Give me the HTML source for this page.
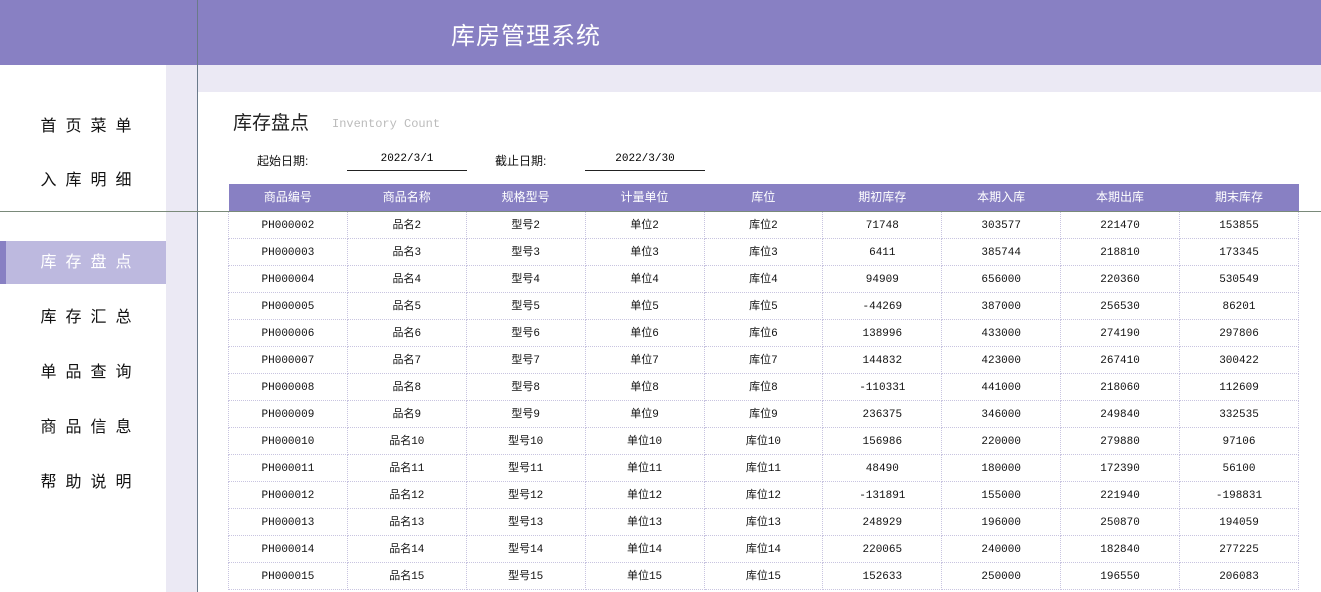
<!DOCTYPE html>
<html><head><meta charset="utf-8"><style>
body{margin:0;width:1321px;height:592px;overflow:hidden;position:relative;background:#fff;font-family:"Liberation Sans","Noto Sans CJK SC",sans-serif}
.hd{position:absolute;left:0;top:0;width:1321px;height:65px;background:#8880c3}
.hd .t{position:absolute;left:451px;top:16px;color:#fff;font-size:24px;letter-spacing:1px}
.vl{position:absolute;left:197px;top:0;width:1px;height:592px;background:#6a7a8a}
.strip{position:absolute;left:166px;top:65px;width:31px;height:527px;background:#ebe9f4}
.band{position:absolute;left:198px;top:65px;width:1123px;height:27px;background:#ebe9f4}
.hl{position:absolute;left:0;top:211px;width:1321px;height:1px;background:#7a8a7a;z-index:5}
.nav{position:absolute;left:0;width:166px;height:43px;line-height:43px;box-sizing:border-box;padding-left:15px;text-align:center;font-size:16px;letter-spacing:9px;color:#111}
.nav.a{background:#bdb9df;color:#fff}
.nav.a:before{content:"";position:absolute;left:0;top:0;width:6px;height:43px;background:#8880c3}
.tt{position:absolute;left:233px;top:108px;font-size:19px;color:#222}
.sub{position:absolute;left:332px;top:117px;font-family:"Liberation Mono",monospace;font-size:12px;color:#bbb}
.lb{position:absolute;top:152px;font-size:12px;color:#111}
.dv{position:absolute;top:151px;width:120px;height:19px;line-height:17px;border-bottom:1px solid #222;text-align:center;font-size:11px;font-family:"Liberation Mono",monospace}
table{position:absolute;left:228px;top:184px;border-collapse:collapse;width:1071px;table-layout:fixed}
th{background:#8880c3;color:#fff;font-weight:normal;font-size:12px;height:27px;padding:0;line-height:27px}
td{height:23px;padding:3px 0 0 0;text-align:center;font-size:11px;line-height:23px;font-family:"Liberation Mono","Noto Sans CJK SC",monospace;border:1px dotted #c8c4e0;color:#111;vertical-align:middle}
</style></head><body>
<div class="hd"><div class="t">库房管理系统</div></div>
<div class="strip"></div><div class="band"></div><div class="vl"></div><div class="hl"></div>
<div class="nav" style="top:105px">首页菜单</div>
<div class="nav" style="top:159px">入库明细</div>
<div class="nav a" style="top:241px">库存盘点</div>
<div class="nav" style="top:296px">库存汇总</div>
<div class="nav" style="top:351px">单品查询</div>
<div class="nav" style="top:406px">商品信息</div>
<div class="nav" style="top:461px">帮助说明</div>
<div class="tt">库存盘点</div><div class="sub">Inventory Count</div>
<div class="lb" style="left:257px">起始日期:</div><div class="dv" style="left:347px">2022/3/1</div>
<div class="lb" style="left:495px">截止日期:</div><div class="dv" style="left:585px">2022/3/30</div>
<table>
<tr><th>商品编号</th><th>商品名称</th><th>规格型号</th><th>计量单位</th><th>库位</th><th>期初库存</th><th>本期入库</th><th>本期出库</th><th>期末库存</th></tr>
<tr><td>PH000002</td><td>品名2</td><td>型号2</td><td>单位2</td><td>库位2</td><td>71748</td><td>303577</td><td>221470</td><td>153855</td></tr>
<tr><td>PH000003</td><td>品名3</td><td>型号3</td><td>单位3</td><td>库位3</td><td>6411</td><td>385744</td><td>218810</td><td>173345</td></tr>
<tr><td>PH000004</td><td>品名4</td><td>型号4</td><td>单位4</td><td>库位4</td><td>94909</td><td>656000</td><td>220360</td><td>530549</td></tr>
<tr><td>PH000005</td><td>品名5</td><td>型号5</td><td>单位5</td><td>库位5</td><td>-44269</td><td>387000</td><td>256530</td><td>86201</td></tr>
<tr><td>PH000006</td><td>品名6</td><td>型号6</td><td>单位6</td><td>库位6</td><td>138996</td><td>433000</td><td>274190</td><td>297806</td></tr>
<tr><td>PH000007</td><td>品名7</td><td>型号7</td><td>单位7</td><td>库位7</td><td>144832</td><td>423000</td><td>267410</td><td>300422</td></tr>
<tr><td>PH000008</td><td>品名8</td><td>型号8</td><td>单位8</td><td>库位8</td><td>-110331</td><td>441000</td><td>218060</td><td>112609</td></tr>
<tr><td>PH000009</td><td>品名9</td><td>型号9</td><td>单位9</td><td>库位9</td><td>236375</td><td>346000</td><td>249840</td><td>332535</td></tr>
<tr><td>PH000010</td><td>品名10</td><td>型号10</td><td>单位10</td><td>库位10</td><td>156986</td><td>220000</td><td>279880</td><td>97106</td></tr>
<tr><td>PH000011</td><td>品名11</td><td>型号11</td><td>单位11</td><td>库位11</td><td>48490</td><td>180000</td><td>172390</td><td>56100</td></tr>
<tr><td>PH000012</td><td>品名12</td><td>型号12</td><td>单位12</td><td>库位12</td><td>-131891</td><td>155000</td><td>221940</td><td>-198831</td></tr>
<tr><td>PH000013</td><td>品名13</td><td>型号13</td><td>单位13</td><td>库位13</td><td>248929</td><td>196000</td><td>250870</td><td>194059</td></tr>
<tr><td>PH000014</td><td>品名14</td><td>型号14</td><td>单位14</td><td>库位14</td><td>220065</td><td>240000</td><td>182840</td><td>277225</td></tr>
<tr><td>PH000015</td><td>品名15</td><td>型号15</td><td>单位15</td><td>库位15</td><td>152633</td><td>250000</td><td>196550</td><td>206083</td></tr>
</table>
</body></html>
